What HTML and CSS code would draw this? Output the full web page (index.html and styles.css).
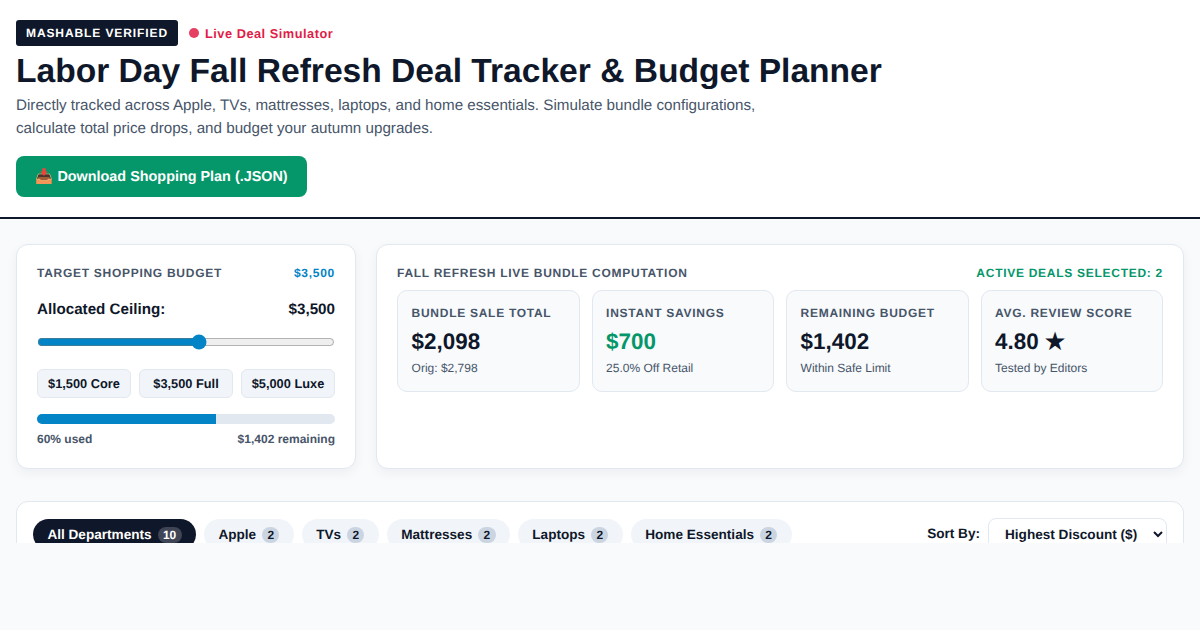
FILE: index.html
```html
<!DOCTYPE html>
<html lang="en">
<head>
  <meta charset="utf-8">
  <title>Labor Day Fall Refresh Deal Tracker</title>
  <link rel="stylesheet" href="styles.css">
</head>
<body>
  <div class="page">
    <header class="hero">
      <div class="hero-tags">
        <span class="badge">MASHABLE VERIFIED</span>
        <span class="live"><span class="live-dot"></span>Live Deal Simulator</span>
      </div>
      <h1>Labor Day Fall Refresh Deal Tracker &amp; Budget Planner</h1>
      <p class="lead">Directly tracked across Apple, TVs, mattresses, laptops, and home essentials. Simulate bundle configurations, calculate total price drops, and budget your autumn upgrades.</p>
      <button class="download" type="button">📥 Download Shopping Plan (.JSON)</button>
    </header>

    <main class="content">
      <div class="top-grid">
        <section class="card">
          <div class="card-head">
            <span class="card-title">TARGET SHOPPING BUDGET</span>
            <span class="card-title blue">$3,500</span>
          </div>
          <div class="ceiling">
            <span>Allocated Ceiling:</span>
            <span>$3,500</span>
          </div>
          <input class="slider" type="range" min="500" max="6000" step="100" value="3500">
          <div class="presets">
            <button type="button">$1,500 Core</button>
            <button type="button">$3,500 Full</button>
            <button type="button">$5,000 Luxe</button>
          </div>
          <div class="meter"><div class="meter-fill" style="width: 60%"></div></div>
          <div class="meter-labels">
            <span>60% used</span>
            <span>$1,402 remaining</span>
          </div>
        </section>

        <section class="card">
          <div class="card-head tight">
            <span class="card-title">FALL REFRESH LIVE BUNDLE COMPUTATION</span>
            <span class="card-title green">ACTIVE DEALS SELECTED: 2</span>
          </div>
          <div class="stats">
            <div class="stat">
              <div class="stat-label">BUNDLE SALE TOTAL</div>
              <div class="stat-value">$2,098</div>
              <div class="stat-note">Orig: $2,798</div>
            </div>
            <div class="stat">
              <div class="stat-label">INSTANT SAVINGS</div>
              <div class="stat-value green">$700</div>
              <div class="stat-note">25.0% Off Retail</div>
            </div>
            <div class="stat">
              <div class="stat-label">REMAINING BUDGET</div>
              <div class="stat-value">$1,402</div>
              <div class="stat-note">Within Safe Limit</div>
            </div>
            <div class="stat">
              <div class="stat-label">AVG. REVIEW SCORE</div>
              <div class="stat-value">4.80 ★</div>
              <div class="stat-note">Tested by Editors</div>
            </div>
          </div>
        </section>
      </div>

      <section class="filters">
        <div class="pills">
          <button class="pill active" type="button">All Departments <span class="count">10</span></button>
          <button class="pill" type="button">Apple <span class="count">2</span></button>
          <button class="pill" type="button">TVs <span class="count">2</span></button>
          <button class="pill" type="button">Mattresses <span class="count">2</span></button>
          <button class="pill" type="button">Laptops <span class="count">2</span></button>
          <button class="pill" type="button">Home Essentials <span class="count">2</span></button>
        </div>
        <div class="sort">
          <label for="sort">Sort By:</label>
          <select id="sort">
            <option>Highest Discount ($)</option>
          </select>
        </div>
      </section>
    </main>
  </div>
</body>
</html>
```

FILE: styles.css
```css
* {
  box-sizing: border-box;
}
body {
  margin: 0;
  background-color: #f8fafc;
  color: #0f172a;
  font-family: "Liberation Sans", Arial, sans-serif;
  text-rendering: geometricPrecision;
}
button, select {
  font-family: inherit;
  text-rendering: geometricPrecision;
}
.page {
  height: 543px; /* the capture cuts off here */
  overflow: hidden;
}

/* header */
.hero {
  height: 219px;
  padding: 20px 16px;
  background-color: #fff;
  border-bottom: 2px solid #0f172a;
}
.hero-tags {
  display: flex;
  align-items: center;
}
.badge {
  padding: 6px 10px;
  background-color: #0f172a;
  color: #fff;
  border-radius: 3px;
  font-size: 12px;
  line-height: 14px;
  font-weight: 700;
  letter-spacing: 0.9px;
}
.live {
  display: flex;
  align-items: center;
  gap: 6px;
  margin-left: 11px;
  color: #e11d48;
  font-size: 12.8px;
  font-weight: 700;
  letter-spacing: 0.5px;
}
.live-dot {
  width: 10px;
  height: 10px;
  border-radius: 50%;
  background-color: #e11d48;
  opacity: 0.85;
}
h1 {
  margin: 5px 0 0;
  font-size: 33.6px;
  line-height: 42px;
}
.lead {
  max-width: 800px;
  margin: 1px 0 0;
  color: #475569;
  font-size: 15.2px;
  line-height: 23px;
}
.download {
  display: block;
  height: 41px;
  margin-top: 16px;
  padding: 0 19.5px;
  background-color: #059669;
  color: #fff;
  border: none;
  border-radius: 8px;
  font-size: 14.4px;
  font-weight: 700;
}

/* content */
.content {
  padding: 25px 16px 0;
}
.top-grid {
  display: grid;
  grid-template-columns: 340px 1fr;
  gap: 20px;
}
.card {
  height: 225px;
  padding: 20px;
  background-color: #fff;
  border: 1px solid #e2e8f0;
  border-radius: 12px;
  box-shadow: 0 4px 12px rgba(15, 23, 42, 0.05);
}
.card-head {
  display: flex;
  justify-content: space-between;
  align-items: center;
  margin-bottom: 20px;
}
.card-head.tight {
  margin-bottom: 9px;
}
.card-title {
  color: #475569;
  font-size: 12px;
  line-height: 16px;
  font-weight: 700;
  letter-spacing: 0.72px;
}
.blue {
  color: #0284c7;
}
.card-title.green, .stat-value.green {
  color: #059669;
}
.ceiling {
  display: flex;
  justify-content: space-between;
  font-size: 15.2px;
  line-height: 18px;
  font-weight: 700;
}
.slider {
  display: block;
  width: 100%;
  margin: 15px 0 0;
  accent-color: #0284c7;
}
.presets {
  display: grid;
  grid-template-columns: repeat(3, 1fr);
  gap: 8px;
  margin-top: 19px;
}
.presets button {
  height: 29px;
  padding: 0;
  background-color: #f1f5f9;
  color: #0f172a;
  border: 1px solid #e2e8f0;
  border-radius: 6px;
  font-size: 12.8px;
  font-weight: 700;
}
.meter {
  height: 10px;
  margin-top: 16px;
  background-color: #e2e8f0;
  border-radius: 5px;
  overflow: hidden;
}
.meter-fill {
  height: 100%;
  background-color: #0284c7;
}
.meter-labels {
  display: flex;
  justify-content: space-between;
  margin-top: 7px;
  color: #475569;
  font-size: 12px;
  line-height: 16px;
  font-weight: 700;
}
.stats {
  display: grid;
  grid-template-columns: repeat(4, 1fr);
  gap: 12px;
}
.stat {
  height: 102px;
  padding: 14px 13.6px;
  background-color: #f8fafc;
  border: 1px solid #e2e8f0;
  border-radius: 10px;
}
.stat-label {
  color: #475569;
  font-size: 12px;
  line-height: 16px;
  font-weight: 700;
  letter-spacing: 0.72px;
}
.stat-value {
  margin-top: 6px;
  font-size: 22.4px;
  line-height: 29px;
  font-weight: 700;
}
.stat-note {
  margin-top: 4px;
  color: #475569;
  font-size: 12px;
  line-height: 16px;
}

/* filter bar */
.filters {
  display: flex;
  justify-content: space-between;
  margin-top: 32px;
  padding: 16px;
  background-color: #fff;
  border: 1px solid #e2e8f0;
  border-radius: 12px;
}
.pills {
  display: flex;
  gap: 8px;
  padding-top: 1px;
}
.pill {
  display: flex;
  align-items: center;
  gap: 6px;
  height: 31px;
  padding: 0 14.4px;
  background-color: #f1f5f9;
  color: #0f172a;
  border: none;
  border-radius: 16px;
  font-size: 13.6px;
  font-weight: 700;
  white-space: nowrap;
}
.pill.active {
  background-color: #0f172a;
  color: #fff;
}
.count {
  padding: 2px 5.3px;
  background-color: #cbd5e1;
  border-radius: 8px;
  font-size: 12px;
  line-height: 12px;
}
.active .count {
  background-color: rgba(255, 255, 255, 0.2);
}
.sort {
  display: flex;
  align-items: flex-start;
  gap: 8px;
}
.sort label {
  margin-top: 8px;
  font-size: 13.6px;
  font-weight: 700;
}
.sort select {
  width: 179px;
  height: 33px;
  padding: 0 12px;
  background-color: #fff;
  color: #0f172a;
  border: 1px solid #e2e8f0;
  border-radius: 8px;
  font-size: 13.6px;
  font-weight: 700;
}
```
